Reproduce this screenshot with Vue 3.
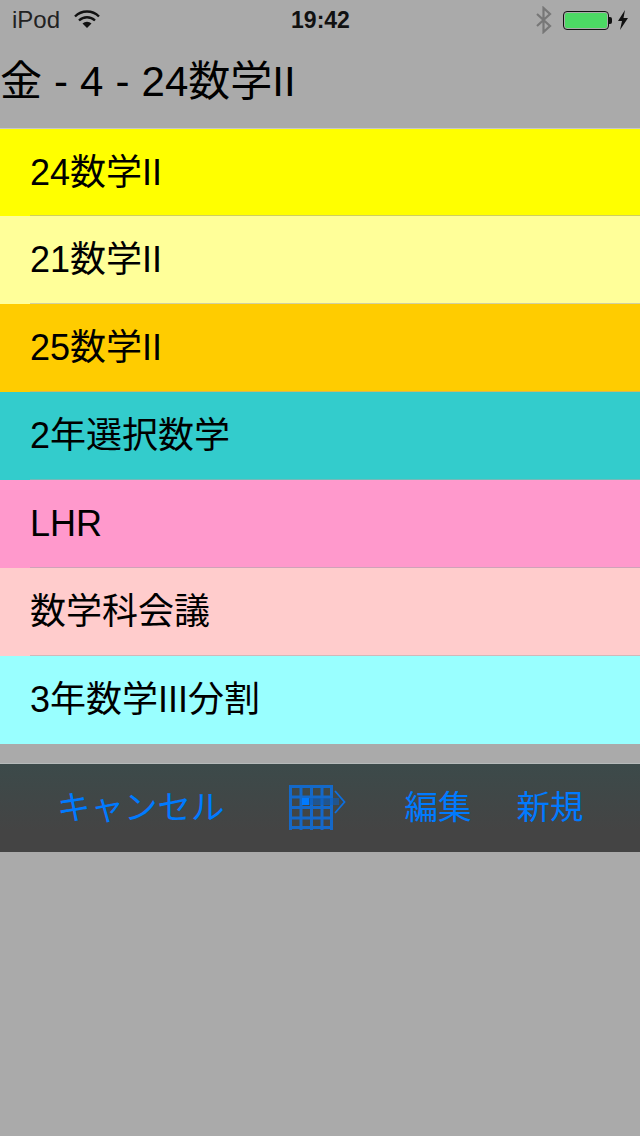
<script setup>
const rows = [
  { label: '24数学II', color: '#ffff00' },
  { label: '21数学II', color: '#ffff99' },
  { label: '25数学II', color: '#ffcc00' },
  { label: '2年選択数学', color: '#33cccc' },
  { label: 'LHR', color: '#ff99cc' },
  { label: '数学科会議', color: '#ffcccc' },
  { label: '3年数学III分割', color: '#99ffff' },
]
const gridLines = [1.5, 12, 22.5, 33, 42.5]
</script>

<template>
  <div class="page">
    <div class="status">
      <div class="status-left">
        <span>iPod</span>
        <svg class="wifi" width="26" height="20" viewBox="0 0 26 20">
          <path d="M1 7.500a17 17 0 0 1 24 0" fill="none" stroke="#111" stroke-width="2.400" />
          <path d="M5 11.500a11.500 11.500 0 0 1 16 0" fill="none" stroke="#111" stroke-width="2.400" />
          <path d="M8.500 14.500l4.500 4.500 4.500-4.500a6.500 6.500 0 0 0-9 0z" fill="#111" />
        </svg>
      </div>
      <div class="time">19:42</div>
      <div class="status-right">
        <svg width="18" height="28" viewBox="0 0 18 28">
          <path d="M2 8l13 12-6.500 6V2L15 8 2 20" fill="none" stroke="#777" stroke-width="2.200" />
        </svg>
        <div class="battery"><div class="battery-fill"></div></div>
        <div class="battery-cap"></div>
        <svg class="bolt" width="12" height="20" viewBox="0 0 12 20">
          <path d="M8 0L1 11h4l-2 9 8-12H6.500z" fill="#111" />
        </svg>
      </div>
    </div>

    <div class="title">金 - 4 - 24数学II</div>

    <ul class="list">
      <li v-for="row in rows" :key="row.label" class="row" :style="{ background: row.color }">
        <span>{{ row.label }}</span>
      </li>
    </ul>

    <div class="toolbar">
      <span class="btn cancel">キャンセル</span>
      <svg class="grid-icon" width="58" height="46" viewBox="0 0 58 46">
        <g fill="none" stroke="#0d6fe0" stroke-width="3" opacity=".85">
          <line v-for="v in gridLines" :key="'v' + v" :x1="v" y1="0" :x2="v" y2="45" />
          <line v-for="v in gridLines" :key="'h' + v" x1="0" :y1="v" x2="44" :y2="v" />
        </g>
        <rect x="18" y="13" width="32" height="7" fill="#0b5fc0" opacity=".6" />
        <path d="M46 6L55.500 17 46 28" fill="none" stroke="#0d6fe0" stroke-width="1.800" />
        <rect x="13" y="13" width="7" height="7" fill="#007aff" />
      </svg>
      <span class="btn edit">編集</span>
      <span class="btn new">新規</span>
    </div>
  </div>
</template>

<style>
html, body { margin: 0; background: #aaaaaa; }
</style>

<style scoped>
.page {
  width: 640px;
  height: 1136px;
  background: #aaaaaa;
  font-family: "Liberation Sans", "Noto Sans CJK JP", sans-serif;
  color: #000;
  overflow: hidden;
}
.status {
  height: 40px;
  display: grid;
  grid-template-columns: 1fr auto 1fr;
  align-items: center;
  padding: 0 11px 0 12px;
  box-sizing: border-box;
  font-size: 24px;
  color: #222;
}
.status-left { display: flex; align-items: center; gap: 14px; }
.wifi { margin-top: -2px; }
.time { font-weight: 700; font-size: 23px; color: #111; }
.status-right { display: flex; align-items: center; justify-content: flex-end; }
.status-right svg:first-child { margin-right: 10px; }
.battery {
  width: 46px;
  height: 19px;
  border: 1px solid #111;
  border-radius: 4px;
  padding: 1px;
  box-sizing: border-box;
}
.battery-fill { height: 100%; background: #4cd964; border-radius: 2px; }
.battery-cap { width: 3px; height: 7px; background: #111; border-radius: 0 2px 2px 0; }
.bolt { margin-left: 5px; }
.title {
  height: 88px;
  line-height: 84px;
  font-size: 42px;
  word-spacing: 0.4px;
  box-sizing: border-box;
  white-space: nowrap;
}
.list {
  list-style: none;
  margin: 0;
  padding: 0;
  border-top: 1px solid #c8c8c8;
}
.row {
  position: relative;
  height: 88px;
  box-sizing: border-box;
  padding-left: 30px;
  display: flex;
  align-items: center;
  font-size: 36px;
  line-height: 40px;
  white-space: nowrap;
}
.row:first-child { height: 87px; }
.row:not(:last-child)::after {
  content: "";
  position: absolute;
  left: 30px;
  right: 0;
  bottom: 0;
  height: 1px;
  background: rgba(170, 170, 170, 0.55);
}
.toolbar {
  margin-top: 19px;
  height: 89px;
  background: linear-gradient(#3c4a4a, #444444 75%);
  border-top: 1px solid #b5baba;
  box-sizing: border-box;
  display: flex;
  align-items: center;
  font-size: 33.5px;
  line-height: 40px;
  color: #007aff;
}
.btn { white-space: nowrap; }
.cancel { margin-left: 57px; }
.grid-icon { margin-left: 64px; margin-top: -1px; }
.edit { margin-left: 58px; }
.new { margin-left: 45px; }
</style>
